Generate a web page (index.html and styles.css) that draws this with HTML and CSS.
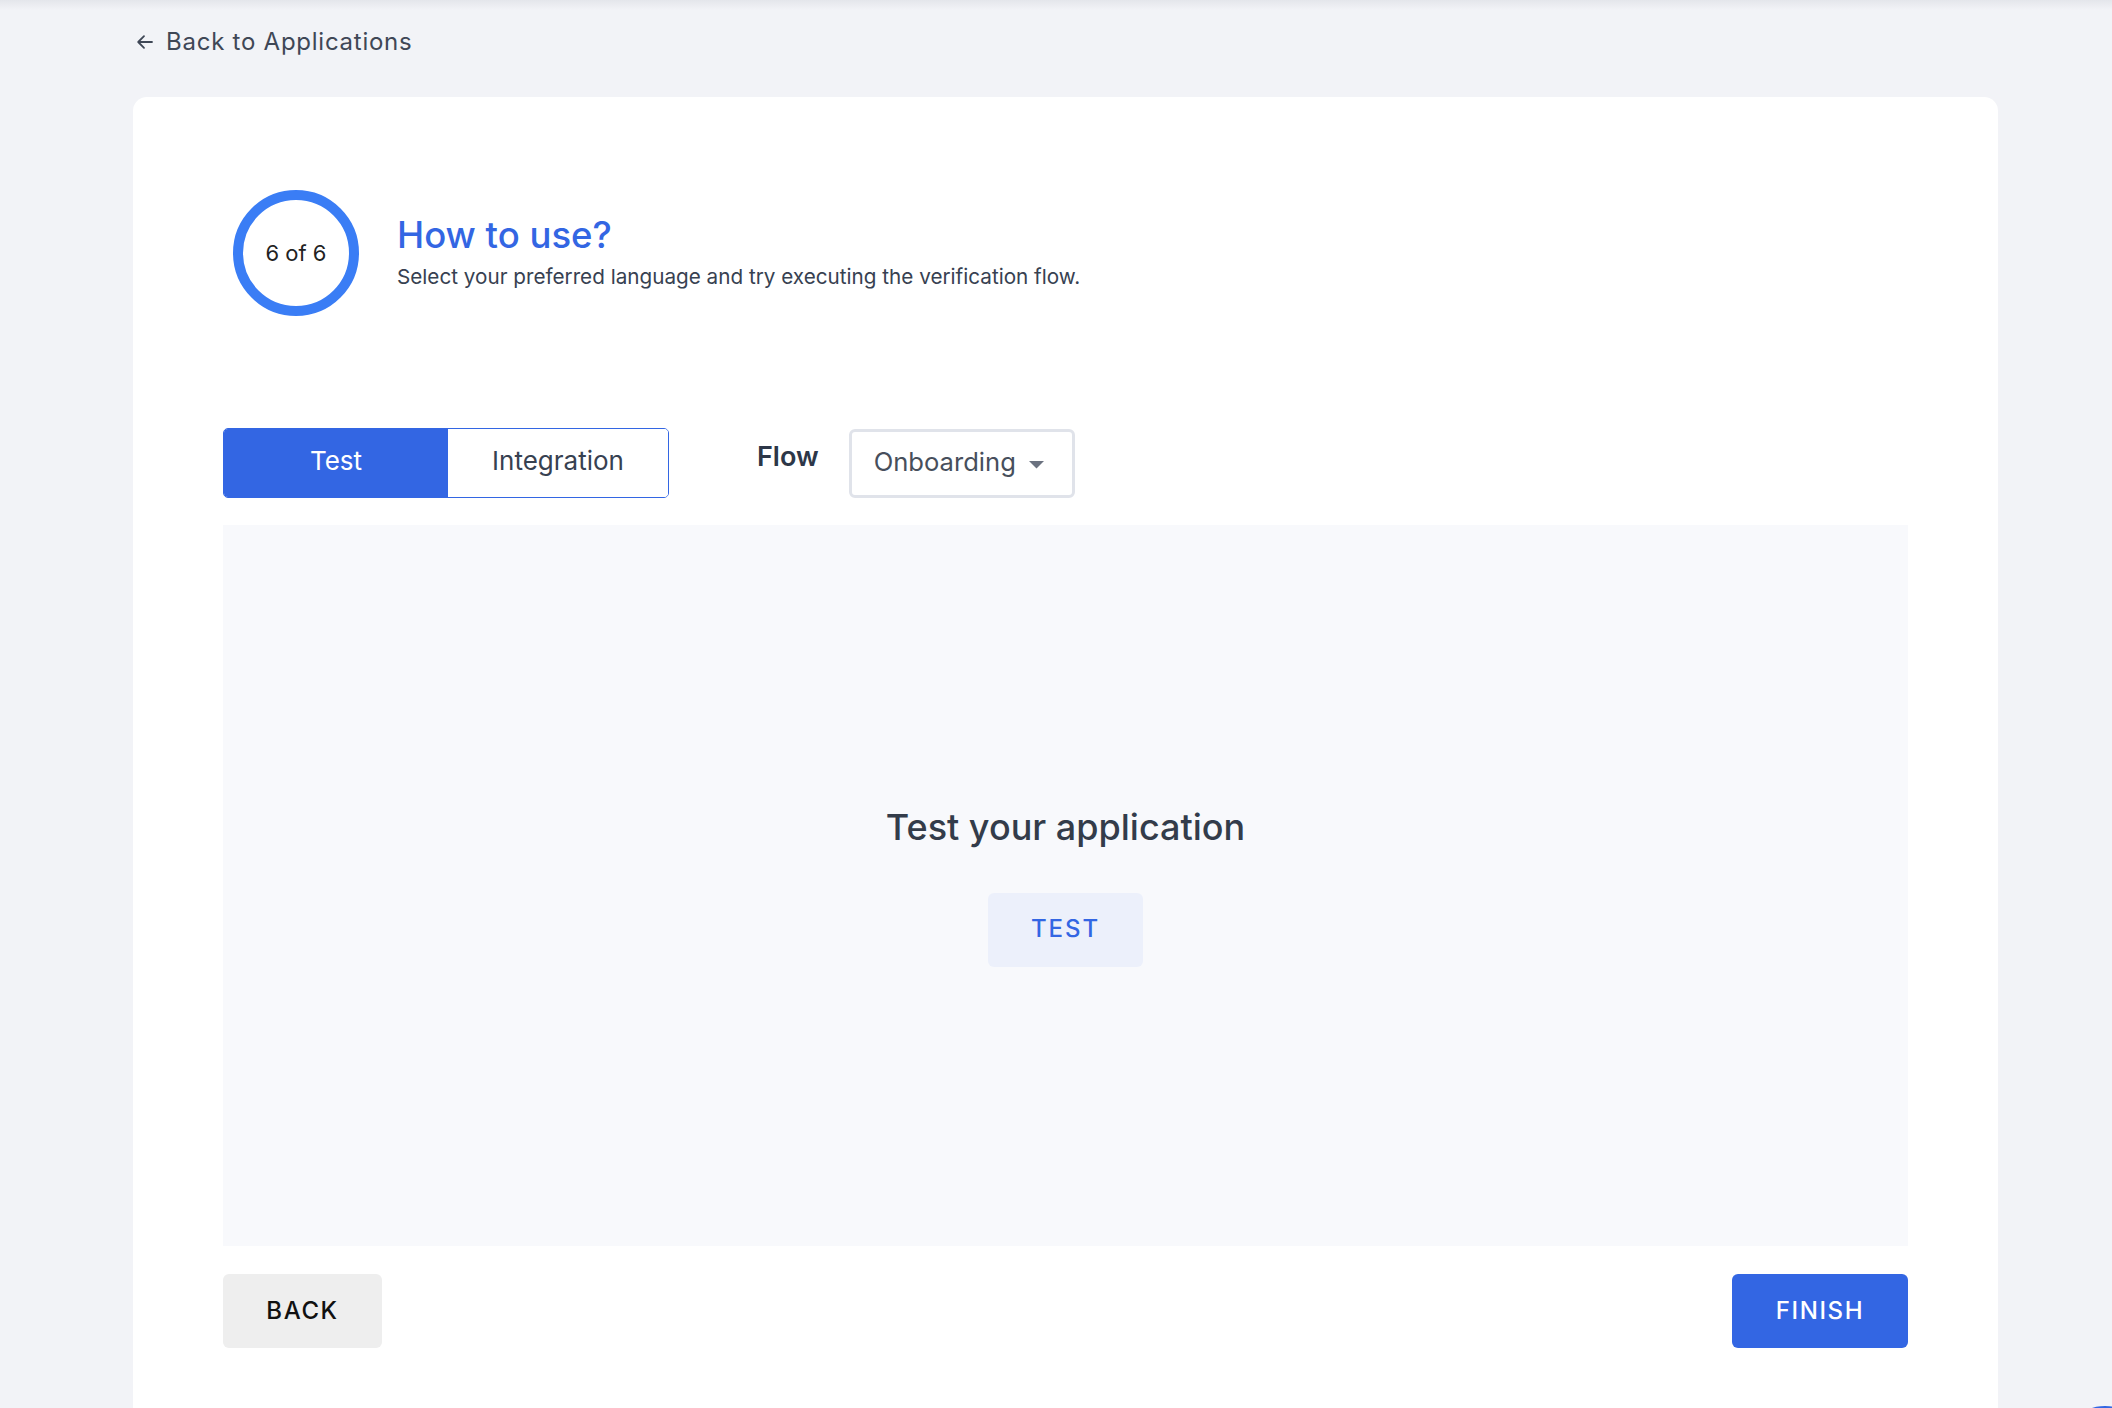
FILE: index.html
```html
<!DOCTYPE html>
<html lang="en">
<head>
<meta charset="utf-8">
<title>How to use?</title>
<link rel="stylesheet" href="styles.css">
</head>
<body>
<div class="page">
  <a class="back" href="#">
    <svg class="back-arrow" width="18" height="16" viewBox="0 0 18 16" fill="none" stroke="#3f4756" stroke-width="1.8" stroke-linecap="round" stroke-linejoin="round"><path d="M16 8H2.5M8 2.2L2.2 8L8 13.8"/></svg>
    <span>Back to Applications</span>
  </a>
  <main class="card">
    <header class="step-header">
      <div class="step-ring">6 of 6</div>
      <div class="step-text">
        <h1 class="step-title">How to use?</h1>
        <p class="step-sub">Select your preferred language and try executing the verification flow.</p>
      </div>
    </header>

    <div class="controls">
      <div class="toggle">
        <button class="seg seg-active">Test</button>
        <button class="seg">Integration</button>
      </div>
      <span class="flow-label">Flow</span>
      <div class="select">
        <span>Onboarding</span>
        <svg width="17" height="9" viewBox="0 0 17 9"><path d="M1 1h15L8.5 8.5z" fill="#6b7280"/></svg>
      </div>
    </div>

    <section class="panel">
      <h2 class="panel-title">Test your application</h2>
      <button class="btn-test">TEST</button>
    </section>

    <div class="actions">
      <button class="btn btn-back">BACK</button>
      <button class="btn btn-finish">FINISH</button>
    </div>
  </main>
</div>
<div class="chat-fab"></div>
</body>
</html>
```
FILE: styles.css
```css
* { box-sizing: border-box; }
html, body { margin: 0; padding: 0; }
body {
  background: #f2f3f7 linear-gradient(to bottom, #e4e6eb 0, #f2f3f7 10px) no-repeat;
  font-family: Inter, "Noto Sans", sans-serif;
  color: #374151;
  overflow: hidden;
  height: 1408px;
}
.page {
  padding: 0 114px 0 133px;
}
.back {
  display: flex;
  align-items: center;
  gap: 12px;
  padding-top: 28px;
  height: 56px;
  margin-left: 3px;
  color: #3f4756;
  text-decoration: none;
  font-size: 24px;
  line-height: 28px;
  letter-spacing: 0.75px;
}
.back-arrow { flex: none; }
.card {
  margin-top: 41px;
  background: #fff;
  border-radius: 14px 14px 0 0;
  padding: 93px 90px 120px 90px;
}
.step-header {
  display: flex;
  align-items: center;
  gap: 38px;
  padding-left: 10px;
}
.step-ring {
  width: 126px;
  height: 126px;
  border: 10.5px solid #3a7df5;
  border-radius: 50%;
  display: flex;
  align-items: center;
  justify-content: center;
  font-size: 22px;
  color: #222;
  flex: none;
}
.step-title {
  margin: 0;
  font-size: 36.5px;
  line-height: 42px;
  font-weight: 500;
  color: #3366e3;
  letter-spacing: 0;
}
.step-sub {
  margin: 8px 0 0;
  font-size: 20.7px;
  line-height: 26px;
  color: #374151;
}
.step-text {
  margin-top: -3px;
}
.controls {
  display: flex;
  align-items: center;
  margin-top: 112px;
  height: 70px;
}
.toggle {
  display: flex;
  height: 70px;
  border: 1.5px solid #3366e3;
  border-radius: 5px;
  overflow: hidden;
}
.seg {
  border: 0;
  background: #fff;
  font-family: inherit;
  font-size: 26px;
  color: #374151;
  width: 220px;
  padding: 0 0 5px;
}
.seg-active {
  width: 224px;
  background: #3366e3;
  color: #fff;
}
.flow-label {
  margin-left: 88px;
  font-size: 27px;
  font-weight: 600;
  color: #2d3748;
  margin-top: -14px;
}
.select {
  margin-left: 30px;
  width: 226px;
  height: 69px;
  border: 3px solid #e0e3ea;
  border-radius: 6px;
  display: flex;
  align-items: center;
  padding: 0 20px 4px 22px;
  gap: 12px;
  font-size: 25.6px;
  color: #474f5c;
}
.select svg { margin-top: 6px; }
.panel {
  margin-top: 27px;
  height: 721px;
  background: #f8f9fc;
  display: flex;
  flex-direction: column;
  align-items: center;
  justify-content: center;
}
.panel-title {
  margin: 0;
  font-size: 36px;
  line-height: 44px;
  font-weight: 500;
  color: #333c4a;
  letter-spacing: 0;
}
.btn-test {
  margin-top: 44px;
  width: 155px;
  height: 74px;
  border: 0;
  border-radius: 6px;
  background: #ecf0fb;
  color: #3366e3;
  font-family: inherit;
  font-size: 24px;
  font-weight: 500;
  letter-spacing: 1.9px;
  padding: 0 0 2px;
}
.actions {
  margin-top: 28px;
  display: flex;
  justify-content: space-between;
}
.btn {
  height: 74px;
  border: 0;
  border-radius: 6px;
  font-family: inherit;
  font-size: 24px;
  font-weight: 500;
  letter-spacing: 1.6px;
  padding: 0 0 2px;
}
.btn-back {
  width: 159px;
  background: #eeeeee;
  color: #111;
}
.btn-finish {
  width: 176px;
  background: #3366e3;
  color: #fff;
}
.chat-fab {
  position: fixed;
  left: 2060px;
  top: 1406px;
  width: 90px;
  height: 90px;
  border-radius: 45px;
  background: #3366e3;
}
```
